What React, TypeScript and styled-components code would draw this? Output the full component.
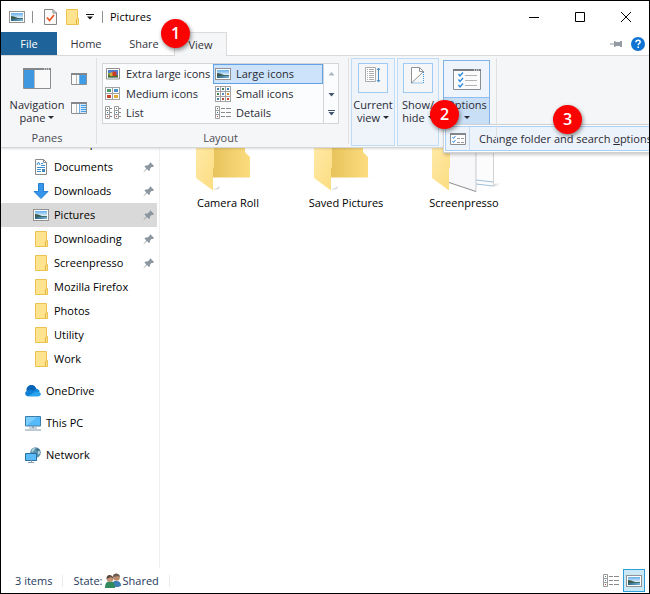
import React from "react";
import styled, { createGlobalStyle, css } from "styled-components";

const Global = createGlobalStyle`
  * { box-sizing: border-box; }
  html, body, #root { height: 100%; }
  body { margin: 0; font: 11px/14px "Open Sans", "Noto Sans", sans-serif; color: #000; background: #fff; }
  button { font: inherit; color: inherit; background: none; border: 0; padding: 0; margin: 0; }
  ul { list-style: none; margin: 0; padding: 0; }
  svg { display: block; flex: none; }
`;

const Window = styled.div`
  position: relative;
  display: flex;
  flex-direction: column;
  min-height: 100vh;
  border: 1px solid #000;
  background: #fff;
  overflow: hidden;
`;

const TitleBar = styled.header`
  display: flex;
  align-items: center;
  height: 31px;
  padding-left: 8px;
`;
const QuickButton = styled.button<{ $narrow?: boolean }>`
  display: grid;
  place-items: center;
  width: ${(p) => (p.$narrow ? 14 : 22)}px;
  height: 22px;
`;
const TitleRule = styled.span<{ $before: number; $after: number }>`
  width: 1px;
  height: 12px;
  background: #8f8f8f;
  margin: 0 ${(p) => p.$after}px 0 ${(p) => p.$before}px;
`;
const Title = styled.h1`
  margin: 0;
  font: inherit;
`;
const WindowButtons = styled.div`
  display: flex;
  margin-left: auto;
`;
const WindowButton = styled.button`
  display: grid;
  place-items: center;
  width: 46px;
  height: 30px;
`;

const TabBar = styled.nav`
  display: flex;
  height: 24px;
  border-bottom: 1px solid #dadbdc;
`;
const Tab = styled.button<{ $kind?: "file" | "active" }>`
  width: ${(p) => (p.$kind === "file" ? 56 : p.$kind === "active" ? 53 : 58)}px;
  height: 23px;
  padding-top: 1px;
  color: #34343e;
  ${(p) => p.$kind === "file" && css`background: #1e6399; color: #fff;`}
  ${(p) =>
    p.$kind === "active" &&
    css`
      height: 24px;
      padding-top: 0;
      margin-left: 1px;
      background: #f5f6f7;
      border: 1px solid #dadbdc;
      border-bottom: 0;
    `}
`;
const TabTools = styled.div`
  display: flex;
  align-items: center;
  gap: 9px;
  margin-left: auto;
  padding-right: 4px;
`;

const Ribbon = styled.section`
  position: relative;
  z-index: 2;
  display: flex;
  height: 92px;
  background: #f5f6f7;
  border-bottom: 1px solid #d5d6d8;
  box-shadow: 0 1px 2px #0002;
  color: #2a2a34;
`;
const Group = styled.div<{ $pad?: string }>`
  position: relative;
  display: flex;
  flex-direction: column;
  padding: ${(p) => p.$pad || "7px 9px 2px 5px"};
  &::after {
    content: "";
    position: absolute;
    right: 0;
    top: 2px;
    bottom: 3px;
    width: 1px;
    background: #e0e1e3;
  }
`;
const GroupLabel = styled.div`
  margin-top: auto;
  text-align: center;
  color: #4c4c56;
`;
const PaneTools = styled.div`
  display: flex;
  gap: 2px;
`;
const StackButton = styled.button`
  display: flex;
  flex-direction: column;
  align-items: center;
  width: 62px;
  padding-top: 5px;
  line-height: 13px;
  gap: 9px;
`;
const PaneToggles = styled.div`
  display: flex;
  flex-direction: column;
  padding-top: 1px;
`;
const PaneToggle = styled.button`
  display: grid;
  place-items: center;
  width: 18px;
  height: 29px;
`;
const Caret = styled.i`
  display: inline-block;
  border: 3px solid transparent;
  border-top-color: currentColor;
  border-bottom: 0;
  margin-left: 3px;
  vertical-align: 3px;
`;
const Gallery = styled.div`
  display: flex;
  height: 61px;
  border: 1px solid #d3d5d8;
  background: #fbfcfd;
`;
const GalleryGrid = styled.div`
  display: grid;
  grid-template-columns: 110px 110px;
  grid-template-rows: 20px 20px 18px;
`;
const ViewOption = styled.button<{ $on?: boolean }>`
  display: flex;
  align-items: center;
  gap: 5px;
  padding: 0 0 1px 1px;
  border: 1px solid ${(p) => (p.$on ? "#62a2e4" : "transparent")};
  background: ${(p) => (p.$on ? "#cde3fb" : "transparent")};
  white-space: nowrap;
`;
const GalleryScroll = styled.div`
  display: flex;
  flex-direction: column;
  border-left: 1px solid #d3d5d8;
`;
const ScrollButton = styled.button`
  display: grid;
  place-items: center;
  width: 14px;
  flex: 1;
`;
const BigButtons = styled.div`
  display: flex;
  gap: 2px;
  height: 88px;
`;
const FrameButton = styled.button<{ $w: number }>`
  display: flex;
  flex-direction: column;
  align-items: center;
  gap: 5px;
  width: ${(p) => p.$w}px;
  padding-top: 4px;
  border: 1px solid #bedcf6;
  background: #eff4fa;
  line-height: 13px;
`;
const FrameIcon = styled.span`
  display: grid;
  place-items: start center;
  width: 30px;
  height: 30px;
  padding-top: 3px;
  border: 1px solid #9dcbf5;
  background: #f5f6f7;
`;
const OptionsWrap = styled.div`
  position: relative;
  margin: 2px 0 0 2px;
`;
const OptionsButton = styled.button`
  display: flex;
  flex-direction: column;
  width: 47px;
  height: 65px;
  border: 1px solid #7fb3ea;
  background: #eef4fb;
  line-height: 13px;
`;
const OptionsIcon = styled.span`
  display: grid;
  place-items: center;
  align-self: stretch;
  height: 37px;
  border-bottom: 1px solid #8fbdec;
`;
const OptionsText = styled.span`
  align-self: stretch;
  flex: 1;
  background: #c9dff5;
`;
const CaretLine = styled.span`
  display: block;
  padding-right: 3px;
`;
const Menu = styled.div`
  position: absolute;
  left: 0;
  top: 64px;
  padding: 1px;
  border: 1px solid #cfd1d4;
  background: #fff;
  box-shadow: 1px 2px 3px #0003;
`;
const MenuItem = styled.button`
  display: flex;
  align-items: center;
  height: 25px;
  padding-right: 24px;
  border: 1px solid #a9cff5;
  background: #edf3fb;
  white-space: nowrap;
`;
const MenuIcon = styled.span`
  display: grid;
  place-items: center;
  align-self: stretch;
  width: 24px;
  margin-right: 9px;
  border-right: 1px solid #c7dcf2;
`;

const Body = styled.div`
  display: flex;
  flex: 1;
  min-height: 0;
  overflow: hidden;
`;
const Sidebar = styled.nav`
  width: 159px;
  padding-right: 2px;
  border-right: 1px solid #f0f0f0;
`;
const QuickAccess = styled.ul`
  margin-top: -17px;
`;
const Place = styled.li<{ $root?: boolean; $on?: boolean }>`
  margin-top: ${(p) => (p.$root ? 8 : 0)}px;
  background: ${(p) => (p.$on ? "#d9d9d9" : "transparent")};
`;
const PlaceButton = styled.button<{ $root?: boolean }>`
  display: flex;
  align-items: center;
  gap: 5px;
  width: 100%;
  height: 24px;
  padding: 0 2px 0 ${(p) => (p.$root ? 24 : 32)}px;
  text-align: left;
`;
const PlaceName = styled.span`
  flex: 1;
`;
const Files = styled.main`
  display: flex;
  flex: 1;
  align-items: flex-start;
  padding-left: 9px;
`;
const FileItem = styled.button`
  display: flex;
  flex-direction: column;
  align-items: center;
  gap: 3px;
  width: 118px;
`;
const StatusBar = styled.footer`
  display: flex;
  align-items: center;
  height: 25px;
  padding: 0 4px 0 14px;
  color: #1e395b;
`;
const StatusCell = styled.span`
  display: flex;
  align-items: center;
  gap: 2px;
  height: 12px;
  padding-right: 10px;
  margin-right: 10px;
  border-right: 1px solid #ececec;
`;
const ViewSwitch = styled.div`
  display: flex;
  gap: 1px;
  margin-left: auto;
`;
const SwitchButton = styled.button<{ $on?: boolean }>`
  display: grid;
  place-items: center;
  width: 22px;
  height: 23px;
  border: 1px solid ${(p) => (p.$on ? "#2f9fdb" : "transparent")};
  background: ${(p) => (p.$on ? "#cbe8f7" : "transparent")};
`;
const Badge = styled.span<{ $x: number; $y: number }>`
  position: absolute;
  z-index: 5;
  left: ${(p) => p.$x}px;
  top: ${(p) => p.$y}px;
  width: 29px;
  height: 29px;
  border-radius: 50%;
  background: #fb0303;
  color: #fff;
  font: 600 16px/29px "Open Sans", sans-serif;
  text-align: center;
  box-shadow: 1px 2px 4px #0007;
`;

const PictureIcon = () => (
  <svg width="16" height="12" viewBox="0 0 16 12">
    <defs>
      <linearGradient id="sky" x2="0" y2="1">
        <stop offset="0" stopColor="#64aeee" />
        <stop offset="1" stopColor="#e4f1f8" />
      </linearGradient>
      <linearGradient id="lake">
        <stop offset="0" stopColor="#2c6680" />
        <stop offset="1" stopColor="#75b2d4" />
      </linearGradient>
    </defs>
    <rect x=".5" y=".5" width="15" height="11" fill="#fff" stroke="#929292" />
    <path d="M2 2h12v5H2z" fill="url(#sky)" />
    <path d="M2 7h12v3H2z" fill="url(#lake)" />
    <path d="M2 5l3 .5 4 1.500h5v.700H2z" fill="#3b5a4c" />
  </svg>
);
const FolderIcon = () => (
  <svg width="16" height="16" viewBox="0 0 16 16">
    <path d="M2.500.5h11v9h1v6h-12z" fill="#ffe38f" stroke="#ebc14f" />
    <path d="M12.500 15v-4l1-1.500" fill="none" stroke="#e3b53d" />
  </svg>
);
const CheckDocIcon = () => (
  <svg width="13" height="16" viewBox="0 0 13 16">
    <path d="M.5.5h8.500l3.500 3.500v11.500H.5z" fill="#fafafa" stroke="#858585" />
    <path d="M9 .5V4h3.500" fill="none" stroke="#858585" />
    <path d="M3 8.500l2.500 3L10 6" fill="none" stroke="#e95420" strokeWidth="1.700" />
  </svg>
);
const CustomizeIcon = () => (
  <svg width="8" height="6" viewBox="0 0 8 6">
    <path d="M0 0h8v1H0zM1 2.500h6L4 5.500z" fill="#111" />
  </svg>
);
const PinIcon = () => (
  <svg width="12" height="12" viewBox="0 0 12 12">
    <path d="M7 1l4 4-1 1H8.500L7 7.500V9L6 10 4 8 .8 11 .5 10.700 3.300 7.500 1.500 5.500l1-1h2L6.500 3z" fill="#8996a0" />
  </svg>
);
const SidePinIcon = () => (
  <svg width="12" height="8" viewBox="0 0 12 8">
    <path d="M0 3.500h4V1h1l1 1h4V1h2v6h-2V6H6L5 7H4V4.500H0z" fill="#949ba2" />
  </svg>
);
const HelpIcon = () => (
  <svg width="14" height="14" viewBox="0 0 14 14">
    <circle cx="7" cy="7" r="7" fill="#0f74d1" />
    <path d="M4.900 5.200C5 3.700 6 3.200 7.100 3.200c1.300 0 2.100.7 2.100 1.800 0 1.500-2 1.500-2 3.200" fill="none" stroke="#fff" strokeWidth="1.500" />
    <path d="M6.400 9.500h1.600V11H6.400z" fill="#fff" />
  </svg>
);
const NavPaneIcon = () => (
  <svg width="28" height="21" viewBox="0 0 28 21">
    <path d="M.5.5h27v20H.5z" fill="#f9f9f9" stroke="#8b8e91" />
    <path d="M0 0h28v2H0z" fill="#83878b" />
    <path d="M1 2h10.500v18H1z" fill="#3e97df" />
    <path d="M11.500 2v18" stroke="#b9bcbe" />
    <path d="M21 1h1m1 0h1m1 0h1" stroke="#fff" />
  </svg>
);
const SidePaneIcon = ({ lines }: { lines?: boolean }) => (
  <svg width="16" height="12" viewBox="0 0 16 12">
    <path d="M.5.5h15v11H.5z" fill="#fbfbfb" stroke="#8b8e91" />
    <path d="M0 0h16v2H0z" fill="#83878b" />
    <path d="M5.500 2v9" stroke="#b8babc" />
    <path d="M9 2h6v9H9z" fill={lines ? "#d3e9fb" : "#3e9be5"} />
    <path d="M8.500 2v9" stroke="#6fb0e4" />
    {lines && <path d="M10 3.500h5M10 5.500h5M10 7.500h5M10 9.500h5" stroke="#3e9be5" />}
  </svg>
);
const ExtraLargeIcon = () => (
  <svg width="14" height="12" viewBox="0 0 14 12">
    <path d="M.5.500h13v10.500H.5z" fill="#fff" stroke="#8f8f8f" />
    <path d="M2 2h10v7.500H2z" fill="#4f7fd0" />
    <path d="M2 7h10v2.500H2z" fill="#4e7231" />
    <path d="M2 5h3v2H2z" fill="#7da543" />
    <path d="M4 5l2-1 1 1v3H4z" fill="#e0a93a" />
    <path d="M6.500 3.500h3l1 1V8h-4z" fill="#c83b27" />
  </svg>
);
const TileIcon = ({ n }: { n: 2 | 3 }) => {
  const s = n === 2 ? 7 : 5;
  const w = n === 2 ? 3 : 2;
  const colors =
    n === 2
      ? ["#4d9b6c", "#4a92cb", "#c8412b", "#e0a93a"]
      : ["#3a7fae", "#4b7a56", "#3a7fae", "#4b7a56", "#5b87c0", "#d08a32", "#3a7fae", "#b0453a", "#c8412b"];
  return (
    <svg width="16" height="16" viewBox="0 0 16 16">
      {colors.map((fill, i) => {
        const x = (i % n) * s + 0.5;
        const y = Math.floor(i / n) * (n === 2 ? 6 : 5) + (n === 2 ? 1.5 : 0.5);
        return (
          <g key={i}>
            <rect x={x} y={y} width={s} height={n === 2 ? 6 : 5} fill="#fff" stroke="#a3a3a3" />
            <rect x={x + 1.5} y={y + 1.5} width={n === 2 ? 4 : w} height={n === 2 ? 3 : 2} fill={fill} />
          </g>
        );
      })}
    </svg>
  );
};
const RowsIcon = ({ wide }: { wide?: boolean }) => (
  <svg width="16" height="14" viewBox="0 0 16 14">
    {(wide ? [0] : [0, 9]).map((x) => (
      <g key={x}>
        <path d={`M${x + 0.5} .5h4v12h-4zM${x + 0.5} 4.500h4M${x + 0.5} 8.500h4`} fill="#fff" stroke="#9b9b9b" />
        <path d={`M${x + 2} 2.500h1`} stroke="#4b7a56" />
        <path d={`M${x + 2} 6.500h1`} stroke="#3477c2" />
        <path d={`M${x + 2} 10.500h1`} stroke="#d33f32" />
      </g>
    ))}
    {wide ? (
      <path d="M6 2.500h4m1 0h5M6 6.500h4m1 0h5M6 10.500h4m1 0h5" stroke="#8a8a8a" />
    ) : (
      <path d="M5 2.500h2M5 6.500h2M5 10.500h2M14 2.500h2M14 6.500h2M14 10.500h2" stroke="#8a8a8a" />
    )}
  </svg>
);
const ScrollIcon = ({ kind }: { kind: "up" | "down" | "more" }) => (
  <svg width="7" height="6" viewBox="0 0 7 6">
    {kind === "up" && <path d="M.5 4.500h6L3.500 1z" fill="#a9b3bd" />}
    {kind !== "up" && <path d="M.5 2h6L3.500 5.500z" fill="#42566e" />}
    {kind === "more" && <path d="M0 0h7v1H0z" fill="#42566e" />}
  </svg>
);
const SortIcon = () => (
  <svg width="16" height="16" viewBox="0 0 16 16">
    <path d="M.5.5h10v14H.5z" fill="#fff" stroke="#aaa" />
    <path d="M2 2.500h7M2 4.500h7M2 6.500h7M2 8.500h7M2 10.500h7M2 12.500h7" stroke="#adadad" />
    <path d="M3.500 1v13" stroke="#fff" />
    <path d="M13.500 1v14M12 3l1.500-2L15 3M12 13l1.500 2 1.500-2" stroke="#4a90c8" fill="none" />
  </svg>
);
const HideIcon = () => (
  <svg width="14" height="17" viewBox="0 0 14 17">
    <path d="M.5.5h8l4 4L.5 16z" fill="#fff" stroke="#929292" />
    <path d="M8.500.5v4h4" fill="none" stroke="#929292" />
    <path d="M12.500 5v11H.5" fill="none" stroke="#4096dc" strokeDasharray="1 1" />
  </svg>
);
const OptionsArt = ({ small }: { small?: boolean }) =>
  small ? (
    <svg width="16" height="12" viewBox="0 0 16 12">
      <path d="M.5.5h15v11H.5z" fill="#fbfbfb" stroke="#8b8e91" />
      <path d="M0 0h16v2H0z" fill="#83878b" />
      <path d="M2.500 4l1 1.500 2-2.500M2.500 8l1 1.500 2-2.500" fill="none" stroke="#308bda" />
      <path d="M7 5.500h3m1 0h3M7 9.500h3m1 0h3" stroke="#9a9a9a" />
    </svg>
  ) : (
    <svg width="28" height="21" viewBox="0 0 28 21">
      <path d="M.5.5h27v20H.5z" fill="#fbfbfb" stroke="#8b8e91" />
      <path d="M0 0h28v2H0z" fill="#777b80" />
      <path d="M5.500 5l1.500 2 3-3.500M5.500 10.500l1.500 2L10 9M5.500 16l1.500 2 3-3.500" fill="none" stroke="#2888dc" strokeWidth="1.300" />
      <path d="M12 6.500h12M12 11.500h12M12 16.500h12" stroke="#b2b2b2" />
      <path d="M21 1h1m1 0h1m1 0h1" stroke="#fff" />
    </svg>
  );
const DesktopIcon = () => (
  <svg width="16" height="14" viewBox="0 0 16 14">
    <path d="M0 0h16v12H0z" fill="#1277b8" />
  </svg>
);
const DocumentIcon = () => (
  <svg width="16" height="16" viewBox="0 0 16 16">
    <path d="M2.500.5h8l3 3v12h-11z" fill="#fff" stroke="#8a8a8a" />
    <path d="M10.500.5v3h3" fill="none" stroke="#8a8a8a" />
    <path d="M4 6l1.500-3L7 6M8 4.500h2M8 6.500h4M4 8.500h8M4 10.500h4M4 12.500h4" fill="none" stroke="#3a8dd0" />
    <path d="M9 10h3v3H9z" fill="#4189ba" />
  </svg>
);
const DownloadIcon = () => (
  <svg width="16" height="16" viewBox="0 0 16 16">
    <path d="M5.500.500h5v8h4.500L8 15.500 1 8.500h4.500z" fill="#3595ea" stroke="#287fce" />
  </svg>
);
const CloudIcon = () => (
  <svg width="16" height="12" viewBox="0 0 16 12">
    <path d="M2 7a4.800 4.800 0 0 1 8.700-4.500L13 6 3 9z" fill="#0a64b5" />
    <path d="M8 6l2-1.500C12 3 14.500 4.500 14.500 6.500L13 10H8z" fill="#1688dc" />
    <path d="M3 11.200C-.5 11-.8 6.500 2.500 5.800 4 4 6.500 4.500 8 6l7 4c-.5.800-1 1.200-2 1.200z" fill="#1080d6" />
    <path d="M3 11.200L9 7.500c2-1.500 4-.5 4.500-.5 3 .2 3.300 4 0 4.200z" fill="#2ba4ee" />
  </svg>
);
const PcIcon = () => (
  <svg width="16" height="15" viewBox="0 0 16 15">
    <path d="M.5.5h15v9.500H.5z" fill="#55baf9" stroke="#3c7eaa" />
    <path d="M1 10L12 1H1z" fill="#7bceff" />
    <path d="M7 10h2v2H7z" fill="#8ba3b4" />
    <path d="M4 12h8" stroke="#91a8b7" />
    <path d="M0 14h16" stroke="#7e97a9" />
  </svg>
);
const NetworkIcon = () => (
  <svg width="16" height="16" viewBox="0 0 16 16">
    <circle cx="10.500" cy="5.500" r="5.300" fill="#5d93ad" />
    <path d="M6.500 3.500C7.500 1.500 9 .8 10.500 1L9 3.500 7 5.500zM13 4l2 .5v2l-2 1z" fill="#b4d4e0" />
    <path d="M12 1l2.500 2L13 4l-2-1z" fill="#3d6f8c" />
    <path d="M.5 6.500h11v7H.5z" fill="#5bbcf9" stroke="#286fa0" />
    <path d="M5.500 13.500h1v1.500M3 15.500h6" stroke="#7fa0b5" />
  </svg>
);
const PeopleIcon = () => (
  <svg width="16" height="16" viewBox="0 0 16 16">
    <path d="M7 14c0-5 1-6 4-6s5 1 5 5l-3 1z" fill="#3d7fb5" />
    <circle cx="11.500" cy="4.500" r="3.300" fill="#b98a6c" />
    <path d="M8 4c-.5-4 6-5 7 0l-2-1z" fill="#6b5a52" />
    <path d="M0 15c0-5 1.500-6.500 5-6.500S10 10 10 15z" fill="#2f8a5c" />
    <circle cx="5" cy="5.800" r="3.300" fill="#c49474" />
    <path d="M1.500 6c-.5-5 6-5.500 7 0L6 4z" fill="#5a4a42" />
  </svg>
);
const BigFolder = ({ paper }: { paper?: boolean }) => (
  <svg width="64" height="45" viewBox="0 0 64 45" overflow="visible">
    <defs>
      <linearGradient id="flap" x2="1" y2="1">
        <stop offset="0" stopColor="#ffe9a6" />
        <stop offset="1" stopColor="#fbdc80" />
      </linearGradient>
      <linearGradient id="back">
        <stop offset="0" stopColor="#e8c35c" />
        <stop offset="1" stopColor="#fbdc7e" />
      </linearGradient>
      <linearGradient id="shade">
        <stop offset="0" stopColor="#d5d5d5" />
        <stop offset="1" stopColor="#fff" />
      </linearGradient>
    </defs>
    {paper ? (
      <>
        <path d="M61 36l8-1-2 2-6 2z" fill="url(#shade)" />
        <path d="M44 0h17.500v38L44 36z" fill="#fcfcfd" />
        <path d="M61.500 0v38" stroke="#d2d2d5" />
        <path d="M44 32l17 2M44 36l17 2" stroke="#9dc0dc" />
        <path d="M17 0h27v43.500L17 34z" fill="#f8f8fb" />
        <path d="M44 0v43.500" stroke="#c9c9cd" />
        <path d="M17 34.500l27 9" stroke="#8b8b8b" />
      </>
    ) : (
      <>
        <path d="M54 29l7-3-2 3zM17 42l7-4-1 3z" fill="url(#shade)" />
        <path d="M17 0h32v4l5 5v20.500H17z" fill="url(#back)" />
      </>
    )}
    <path d="M0 0h18v19l-1 2v21.500L0 30z" fill="url(#flap)" />
  </svg>
);

type PlaceData = { name: string; icon: React.ReactNode; pinned?: boolean; on?: boolean; root?: boolean };
const places: PlaceData[] = [
  { name: "Desktop", icon: <DesktopIcon />, pinned: true },
  { name: "Documents", icon: <DocumentIcon />, pinned: true },
  { name: "Downloads", icon: <DownloadIcon />, pinned: true },
  { name: "Pictures", icon: <PictureIcon />, pinned: true, on: true },
  { name: "Downloading", icon: <FolderIcon />, pinned: true },
  { name: "Screenpresso", icon: <FolderIcon />, pinned: true },
  { name: "Mozilla Firefox", icon: <FolderIcon /> },
  { name: "Photos", icon: <FolderIcon /> },
  { name: "Utility", icon: <FolderIcon /> },
  { name: "Work", icon: <FolderIcon /> },
  { name: "OneDrive", icon: <CloudIcon />, root: true },
  { name: "This PC", icon: <PcIcon />, root: true },
  { name: "Network", icon: <NetworkIcon />, root: true },
];

const views: { name: string; icon: React.ReactNode; on?: boolean }[] = [
  { name: "Extra large icons", icon: <ExtraLargeIcon /> },
  { name: "Large icons", icon: <PictureIcon />, on: true },
  { name: "Medium icons", icon: <TileIcon n={2} /> },
  { name: "Small icons", icon: <TileIcon n={3} /> },
  { name: "List", icon: <RowsIcon /> },
  { name: "Details", icon: <RowsIcon wide /> },
];
const IconSlot = styled.span`
  display: grid;
  place-items: center;
  width: 16px;
`;

export default function App() {
  return (
    <Window>
      <Global />
      <TitleBar>
        <PictureIcon />
        <TitleRule $before={7} $after={6} />
        <QuickButton aria-label="Properties"><CheckDocIcon /></QuickButton>
        <QuickButton aria-label="New folder"><FolderIcon /></QuickButton>
        <QuickButton $narrow aria-label="Customize Quick Access Toolbar"><CustomizeIcon /></QuickButton>
        <TitleRule $before={5} $after={7} />
        <Title>Pictures</Title>
        <WindowButtons>
          <WindowButton aria-label="Minimize">
            <svg width="10" height="10"><path d="M0 5.500h10" stroke="#000" /></svg>
          </WindowButton>
          <WindowButton aria-label="Maximize">
            <svg width="10" height="10"><path d="M.5.5h9v9h-9z" fill="none" stroke="#000" /></svg>
          </WindowButton>
          <WindowButton aria-label="Close">
            <svg width="10" height="10"><path d="M0 0l10 10M10 0L0 10" stroke="#000" /></svg>
          </WindowButton>
        </WindowButtons>
      </TitleBar>
      <TabBar>
        <Tab $kind="file">File</Tab>
        <Tab>Home</Tab>
        <Tab>Share</Tab>
        <Tab $kind="active">View</Tab>
        <TabTools>
          <button aria-label="Pin the ribbon"><SidePinIcon /></button>
          <button aria-label="Help"><HelpIcon /></button>
        </TabTools>
      </TabBar>
      <Ribbon>
        <Group>
          <PaneTools>
            <StackButton>
              <NavPaneIcon />
              <span>Navigation pane<Caret /></span>
            </StackButton>
            <PaneToggles>
              <PaneToggle aria-label="Preview pane"><SidePaneIcon /></PaneToggle>
              <PaneToggle aria-label="Details pane"><SidePaneIcon lines /></PaneToggle>
            </PaneToggles>
          </PaneTools>
          <GroupLabel>Panes</GroupLabel>
        </Group>
        <Group $pad="7px 10px 2px 5px">
          <Gallery>
            <GalleryGrid>
              {views.map((v) => (
                <ViewOption key={v.name} $on={v.on}>
                  <IconSlot>{v.icon}</IconSlot>
                  {v.name}
                </ViewOption>
              ))}
            </GalleryGrid>
            <GalleryScroll>
              <ScrollButton aria-label="Scroll up"><ScrollIcon kind="up" /></ScrollButton>
              <ScrollButton aria-label="Scroll down"><ScrollIcon kind="down" /></ScrollButton>
              <ScrollButton aria-label="More"><ScrollIcon kind="more" /></ScrollButton>
            </GalleryScroll>
          </Gallery>
          <GroupLabel>Layout</GroupLabel>
        </Group>
        <Group $pad="2px 7px 0 2px">
          <BigButtons>
            <FrameButton $w={44}>
              <FrameIcon><SortIcon /></FrameIcon>
              <span>Current view<Caret /></span>
            </FrameButton>
            <FrameButton $w={42}>
              <FrameIcon><HideIcon /></FrameIcon>
              <span>Show/ hide<Caret /></span>
            </FrameButton>
            <OptionsWrap>
              <OptionsButton>
                <OptionsIcon><OptionsArt /></OptionsIcon>
                <OptionsText>Options<CaretLine><Caret /></CaretLine></OptionsText>
              </OptionsButton>
              <Menu>
                <MenuItem>
                  <MenuIcon><OptionsArt small /></MenuIcon>
                  <span>Change folder and search <u>o</u>ptions</span>
                </MenuItem>
              </Menu>
            </OptionsWrap>
          </BigButtons>
        </Group>
      </Ribbon>
      <Body>
        <Sidebar>
          <QuickAccess>
            {places.map((p) => (
              <Place key={p.name} $root={p.root} $on={p.on}>
                <PlaceButton $root={p.root}>
                  {p.icon}
                  <PlaceName>{p.name}</PlaceName>
                  {p.pinned && <PinIcon />}
                </PlaceButton>
              </Place>
            ))}
          </QuickAccess>
        </Sidebar>
        <Files>
          <FileItem><BigFolder />Camera Roll</FileItem>
          <FileItem><BigFolder />Saved Pictures</FileItem>
          <FileItem><BigFolder paper />Screenpresso</FileItem>
        </Files>
      </Body>
      <StatusBar>
        <StatusCell>3 items</StatusCell>
        <StatusCell>State: <PeopleIcon /> Shared</StatusCell>
        <ViewSwitch>
          <SwitchButton aria-label="Details view"><RowsIcon wide /></SwitchButton>
          <SwitchButton $on aria-label="Large icons view"><PictureIcon /></SwitchButton>
        </ViewSwitch>
      </StatusBar>
      <Badge $x={160} $y={18}>1</Badge>
      <Badge $x={429} $y={99}>2</Badge>
      <Badge $x={552} $y={104}>3</Badge>
    </Window>
  );
}
